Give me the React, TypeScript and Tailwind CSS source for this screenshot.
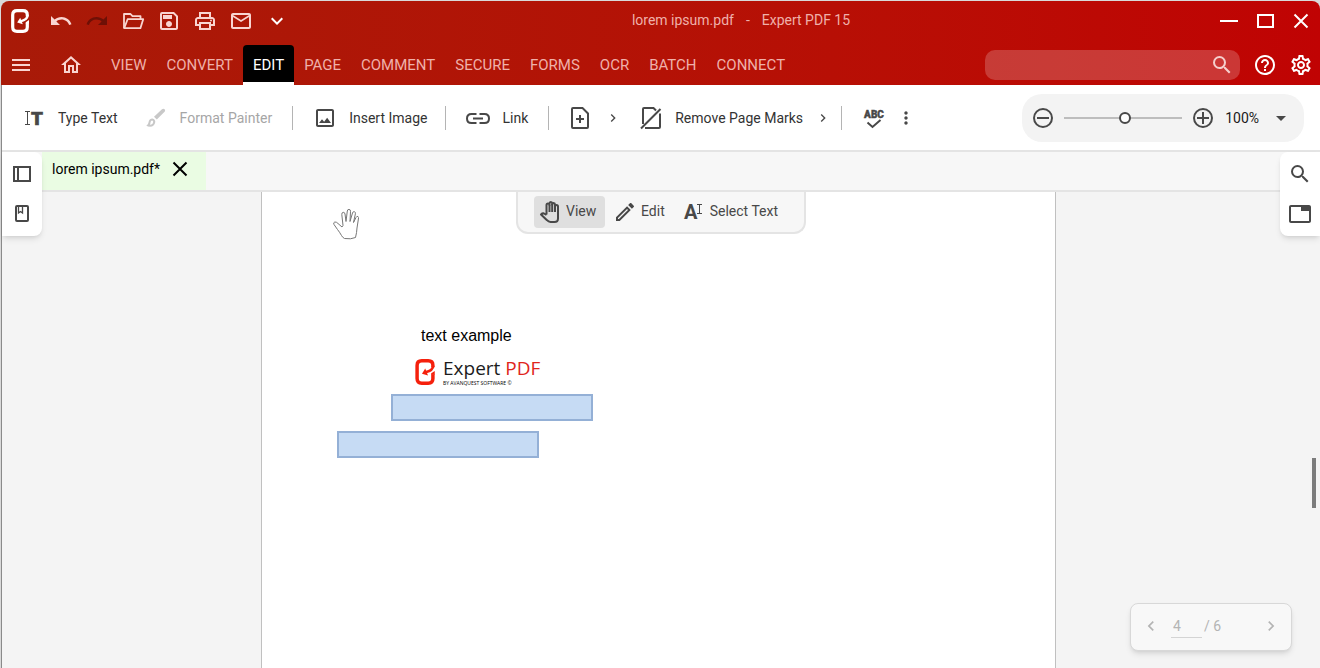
import { ReactNode, useState } from 'react'
import {
  MdArrowDropDown,
  MdHelpOutline,
  MdKeyboardArrowDown,
  MdKeyboardArrowLeft,
  MdKeyboardArrowRight,
  MdMenu,
  MdMoreVert,
  MdOutlineEdit,
  MdOutlineHome,
  MdOutlineImage,
  MdOutlineMail,
  MdOutlinePrint,
  MdOutlineSave,
  MdOutlineSettings,
  MdOutlineTab,
  MdRedo,
  MdSearch,
  MdUndo,
} from 'react-icons/md'

const menuTabs = ['VIEW', 'CONVERT', 'EDIT', 'PAGE', 'COMMENT', 'SECURE', 'FORMS', 'OCR', 'BATCH', 'CONNECT']

function Logo({ className }: { className?: string }) {
  return (
    <svg viewBox="0 0 18 24" className={className} fill="none" stroke="currentColor" aria-hidden="true">
      <path d="M16.3 14V18Q16.300 22.300 12 22.300H6Q1.700 22.300 1.700 18V6Q1.700 1.700 6 1.700H12Q16.300 1.700 16.300 6V7.500" strokeWidth="3.2" />
      <path d="M16.500 6.500Q16.500 10.500 9.500 12.300" strokeWidth="2.400" />
      <path d="M6.200 13.500L9.200 8.800L11.800 15.200Z" fill="currentColor" stroke="none" />
      <path d="M14.700 14.500V13.200L18 11V14.500Z" fill="currentColor" stroke="none" />
    </svg>
  )
}

function FolderOpenIcon() {
  return (
    <svg viewBox="0 0 24 24" className="size-6" fill="none" stroke="currentColor" strokeWidth="1.8" strokeLinejoin="round" aria-hidden="true">
      <path d="M3 19V5H9.5L11.5 7.2H19.5V10" />
      <path d="M3.2 19.2L6.6 10.2H22.2L19.4 19.2Z" />
    </svg>
  )
}

function CloseIcon() {
  return (
    <svg viewBox="0 0 24 24" className="size-6" fill="none" stroke="currentColor" strokeWidth="2" aria-hidden="true">
      <path d="M5.5 5.5L18.5 18.5M18.5 5.5L5.5 18.5" />
    </svg>
  )
}

function LinkIcon() {
  return (
    <svg viewBox="0 0 24 24" className="size-6 shrink-0" fill="none" stroke="currentColor" strokeWidth="2" aria-hidden="true">
      <path d="M10.5 8H5.5Q1 8 1 12.5Q1 17 5.5 17H10.5M13.5 8H18.5Q23 8 23 12.5Q23 17 18.5 17H13.5M7 12.5H17" />
    </svg>
  )
}

function TypeTextIcon() {
  return (
    <svg viewBox="0 0 24 24" className="size-6 shrink-0" aria-hidden="true">
      <path d="M3 5.5H8M3 18.5H8M5.5 5.5V18.5" stroke="currentColor" fill="none" />
      <text x="9" y="19" fontSize="19" fontWeight="900" fontFamily="Roboto, sans-serif" fill="currentColor" stroke="currentColor" strokeWidth="0.6">T</text>
    </svg>
  )
}

function BrushIcon() {
  return (
    <svg viewBox="0 0 24 24" className="size-6 shrink-0" fill="currentColor" aria-hidden="true">
      <path d="M18 3.2Q19.5 2.2 20.7 3.3Q21.6 4.5 20.6 5.8L12.8 13.5L10 10.8Z" />
      <path d="M8.5 12.5Q11.3 13.2 11.3 16Q10.5 20.8 6 20.8Q3.7 20.8 2.3 19.4Q4.3 18.8 4.5 16.5Q5 12.5 8.5 12.5ZM8.2 14.6Q9.2 14.8 9.2 15.8Q9 18.8 5.8 18.8Q6.5 18 6.5 16.6Q6.7 14.6 8.2 14.6Z" fillRule="evenodd" />
    </svg>
  )
}

function AddPageIcon() {
  return (
    <svg viewBox="0 0 24 24" className="size-6 shrink-0" fill="none" stroke="currentColor" strokeWidth="2" aria-hidden="true">
      <path d="M4 2H13.5L19 7.5V21Q19 22 18 22H4Q3 22 3 21V3Q3 2 4 2ZM11 9V17M7 13H15" />
    </svg>
  )
}

function RemoveMarksIcon() {
  return (
    <svg viewBox="0 0 24 24" className="size-6 shrink-0" fill="none" stroke="currentColor" strokeWidth="2" aria-hidden="true">
      <path d="M4 18V3Q4 2 5 2H14.5L17 4.5M21 7.5V21Q21 22 20 22H6M2 22.5L21.500 3" />
    </svg>
  )
}

function SpellCheckIcon() {
  return (
    <svg viewBox="0 0 24 24" className="size-6 shrink-0" aria-hidden="true">
      <text x="12" y="12" textAnchor="middle" fontSize="10" fontWeight="900" fontFamily="Roboto, sans-serif" fill="currentColor" stroke="currentColor" strokeWidth="0.4">ABC</text>
      <path d="M5.5 16.5L10.5 21L18.5 14" fill="none" stroke="currentColor" strokeWidth="2" />
    </svg>
  )
}

function HandIcon() {
  return (
    <svg viewBox="0 0 24 24" className="size-6 shrink-0" fill="none" stroke="currentColor" strokeWidth="2" strokeLinejoin="round" aria-hidden="true">
      <path d="M8.5 14.5V5Q8.5 3.5 10 3.5Q11.5 3.5 11.500 5V3.5Q11.5 2 12.8 2Q14.2 2 14.2 3.5V4.5Q14.3 3 15.6 3Q17 3 17 4.5V6.5Q17.2 5 18.5 5Q20 5 20 6.5V18.5Q20 22 16.5 22H12.5Q10.5 22 9 20.2L3 14.5Q4.5 13 6 13.5L8.5 15" />
      <path d="M11.5 5V12M14.2 4V12M17 5V12" />
    </svg>
  )
}

function SelectTextIcon() {
  return (
    <svg viewBox="0 0 24 24" className="size-6 shrink-0" aria-hidden="true">
      <text x="2" y="19" fontSize="20" fontWeight="700" fontFamily="Roboto, sans-serif" fill="currentColor">A</text>
      <path d="M15 4.5H20M15 13.5H20M17.5 4.5V13.5" stroke="currentColor" fill="none" />
    </svg>
  )
}

function HandCursor() {
  return (
    <svg viewBox="0 0 26 32" className="absolute left-[71px] top-4 h-8 w-[26px]" fill="white" stroke="#777777" aria-hidden="true">
      <path d="M8.5 27.5Q6.5 24 4.5 21.5L1 16.5Q0 14.5 1.8 14Q3.5 13.8 5 15.5L9 19L10 17.5L8.8 6.5Q8.7 4.5 10.2 4.3Q11.7 4.2 12 6L13 13.5L14.3 3Q14.5 1.3 16 1.4Q17.6 1.5 17.5 3.3L17 13.5L19.5 5Q20 3.3 21.4 3.7Q22.7 4 22.4 5.8L20.5 14.5L23 9.5Q23.8 7.9 25 8.5Q26 9.2 25.4 11L24 20Q23.8 24.5 22.5 29.5Q18 31.5 11.5 30.5Q9.5 29.5 8.5 27.5Z" />
    </svg>
  )
}

function IconButton({ label, className = '', children }: { label: string; className?: string; children: ReactNode }) {
  return (
    <button type="button" aria-label={label} className={`flex size-6 shrink-0 items-center justify-center ${className}`}>
      {children}
    </button>
  )
}

function Separator({ className = '' }: { className?: string }) {
  return <span className={`h-6 w-px shrink-0 bg-[#b4b4b4] ${className}`} />
}

function TitleBar() {
  return (
    <div className="flex h-11 items-center pb-1 pl-2.5 pr-[7px] text-[#f9d5d1]">
      <Logo className="h-6 w-[18px] shrink-0 text-white" />
      <div className="ml-5 flex gap-3">
        <IconButton label="Undo"><MdUndo className="size-6" /></IconButton>
        <IconButton label="Redo" className="text-[#6e1006]"><MdRedo className="size-6" /></IconButton>
        <IconButton label="Open"><FolderOpenIcon /></IconButton>
        <IconButton label="Save"><MdOutlineSave className="size-6" /></IconButton>
        <IconButton label="Print"><MdOutlinePrint className="size-6" /></IconButton>
        <IconButton label="Mail"><MdOutlineMail className="size-6" /></IconButton>
        <IconButton label="More" className="text-white"><MdKeyboardArrowDown className="size-6" /></IconButton>
      </div>
      <h1 className="flex flex-1 justify-center gap-3 pb-0.5 pr-6 text-sm text-[#efb0aa]">
        <span>lorem ipsum.pdf</span>
        <span>-</span>
        <span>Expert PDF 15</span>
      </h1>
      <div className="flex gap-3 text-white">
        <IconButton label="Minimize"><span className="h-0.5 w-[18px] bg-white" /></IconButton>
        <IconButton label="Maximize"><span className="h-3.5 w-[17px] border-2 border-white" /></IconButton>
        <IconButton label="Close"><CloseIcon /></IconButton>
      </div>
    </div>
  )
}

function MenuBar() {
  const [active, setActive] = useState('EDIT')

  return (
    <div className="flex h-10 items-center pl-2 pr-[7px] text-white">
      <IconButton label="Menu" className="text-[#f9d5d1]"><MdMenu className="size-6" /></IconButton>
      <IconButton label="Home" className="ml-[26px] text-[#f9d5d1]"><MdOutlineHome className="size-6" /></IconButton>
      <nav className="ml-[18px] flex h-full">
        {menuTabs.map((tab) => (
          <button
            key={tab}
            type="button"
            onClick={() => setActive(tab)}
            className={
              tab === active
                ? 'rounded-t border-b-3 border-white bg-black px-2.5 pt-1 text-[15px] text-white'
                : 'border-b-3 border-transparent px-2.5 pt-1 text-[15px] text-[#efb0aa]'
            }
          >
            {tab}
          </button>
        ))}
      </nav>
      <label className="ml-auto flex h-[30px] w-[255px] items-center rounded-[10px] bg-white/20 pr-1.5">
        <input type="text" aria-label="Search" className="min-w-0 flex-1 bg-transparent px-3 text-sm outline-none" />
        <MdSearch className="size-6 text-[#f5cfcd]" />
      </label>
      <div className="ml-[13px] flex gap-3">
        <IconButton label="Help"><MdHelpOutline className="size-6" /></IconButton>
        <IconButton label="Settings"><MdOutlineSettings className="size-6" /></IconButton>
      </div>
    </div>
  )
}

function ToolButton({ icon, label, disabled, className = '' }: { icon: ReactNode; label: string; disabled?: boolean; className?: string }) {
  return (
    <button
      type="button"
      disabled={disabled}
      className={`flex shrink-0 items-center gap-3 whitespace-nowrap text-sm text-[#333333] disabled:text-[#a6a6a6] [&_svg]:text-[#484848] disabled:[&_svg]:text-[#c8c8c8] ${className}`}
    >
      {icon}
      <span>{label}</span>
    </button>
  )
}

function Toolbar() {
  const [zoom, setZoom] = useState(52)

  return (
    <div className="flex h-[67px] items-center border-b-2 border-[#e4e4e4] bg-white pl-5 pr-4 text-[#484848]">
      <ToolButton icon={<TypeTextIcon />} label="Type Text" />
      <ToolButton icon={<BrushIcon />} label="Format Painter" disabled className="ml-[26px]" />
      <Separator className="mx-5" />
      <ToolButton icon={<MdOutlineImage className="size-6" />} label="Insert Image" />
      <Separator className="ml-[18px] mr-5" />
      <ToolButton icon={<LinkIcon />} label="Link" />
      <Separator className="mx-5" />
      <IconButton label="Insert page"><AddPageIcon /></IconButton>
      <IconButton label="Insert page options" className="ml-2"><MdKeyboardArrowRight className="size-4" /></IconButton>
      <ToolButton icon={<RemoveMarksIcon />} label="Remove Page Marks" className="ml-3.5" />
      <IconButton label="Page marks options" className="ml-2"><MdKeyboardArrowRight className="size-4" /></IconButton>
      <Separator className="ml-1.5 mr-5" />
      <IconButton label="Spell check"><SpellCheckIcon /></IconButton>
      <IconButton label="More tools" className="ml-2"><MdMoreVert className="size-5" /></IconButton>

      <div className="ml-auto flex h-12 shrink-0 items-center rounded-[20px] bg-[#f3f3f3] px-[11px]">
        <button type="button" aria-label="Zoom out" className="flex size-5 items-center justify-center rounded-full border-2 border-[#484848]">
          <span className="h-0.5 w-3 bg-[#484848]" />
        </button>
        <input
          type="range"
          aria-label="Zoom"
          value={zoom}
          onChange={(e) => setZoom(Number(e.target.value))}
          className="mx-[11px] h-0.5 w-[118px] appearance-none bg-[#bdbdbd] [&::-webkit-slider-thumb]:size-3 [&::-webkit-slider-thumb]:appearance-none [&::-webkit-slider-thumb]:rounded-full [&::-webkit-slider-thumb]:border-2 [&::-webkit-slider-thumb]:border-[#484848] [&::-webkit-slider-thumb]:bg-white"
        />
        <button type="button" aria-label="Zoom in" className="relative flex size-5 items-center justify-center rounded-full border-2 border-[#484848]">
          <span className="h-0.5 w-3 bg-[#484848]" />
          <span className="absolute h-3 w-0.5 bg-[#484848]" />
        </button>
        <button type="button" className="ml-3 flex items-center gap-2.5 text-sm text-[#1a1a1a]">
          100%
          <MdArrowDropDown className="size-6 text-[#484848]" />
        </button>
      </div>
    </div>
  )
}

function FileTabs() {
  return (
    <div className="flex h-10 border-b-2 border-[#e4e4e4] bg-[#f7f7f7] pl-10">
      <div className="flex w-[164px] items-center bg-[#eafce3] pb-1 pl-2.5 text-sm text-black">
        <span>lorem ipsum.pdf*</span>
        <IconButton label="Close file" className="ml-2"><CloseIcon /></IconButton>
      </div>
    </div>
  )
}

function ViewModes() {
  return (
    <div className="absolute inset-x-0 top-0 flex justify-center">
      <div className="flex h-[42px] w-[290px] items-start rounded-b-xl border-2 border-t-0 border-[#e4e4e4] bg-[#f7f7f7] pl-4 pt-1 text-sm">
        <button type="button" aria-pressed="true" className="flex h-8 w-[71px] items-center gap-1 rounded bg-[#dfdfdf] pl-1">
          <HandIcon />
          <span className="pb-0.5">View</span>
        </button>
        <button type="button" className="ml-2 flex h-8 items-center gap-1">
          <MdOutlineEdit className="size-6" />
          <span className="pb-0.5">Edit</span>
        </button>
        <button type="button" className="ml-[17px] flex h-8 items-center gap-1">
          <SelectTextIcon />
          <span className="pb-0.5">Select Text</span>
        </button>
      </div>
    </div>
  )
}

function SidePanelIcon() {
  return (
    <svg viewBox="0 0 24 24" className="size-6" fill="none" stroke="currentColor" strokeWidth="2" aria-hidden="true">
      <path d="M4 5H20V19H4ZM8 5V19" />
    </svg>
  )
}

function BookmarkPageIcon() {
  return (
    <svg viewBox="0 0 24 24" className="size-6" fill="none" stroke="currentColor" strokeWidth="2" aria-hidden="true">
      <rect x="6" y="4" width="12" height="15" rx="1" />
      <path d="M8.5 5V11L10.5 9.5L12.5 11V5" strokeWidth="1.3" />
    </svg>
  )
}

function PdfPage() {
  return (
    <div className="relative w-[795px] border-x border-[#c0c0c0] bg-white pl-[75px] pt-[134px]">
      <HandCursor />
      <p className="ml-[84px] font-['Liberation_Sans',Arial,sans-serif] text-base leading-5 text-black">text example</p>
      <div className="ml-[78px] mt-3 flex items-start gap-2">
        <Logo className="mt-px h-[26px] w-5 text-[#f5200c]" />
        <div className="font-['Open_Sans','Noto_Sans',sans-serif]">
          <p className="text-[19px] leading-5 text-[#1c1c1c]">Expert <span className="text-[#e0251b]">PDF</span></p>
          <p className="mt-0.5 text-[5px] leading-[6px] text-black">BY AVANQUEST SOFTWARE ©</p>
        </div>
      </div>
      <div className="ml-[54px] mt-2 h-[27px] w-[202px] border-2 border-[#94b0d6] bg-[#c6dbf4]" />
      <div className="mt-2.5 h-[27px] w-[202px] border-2 border-[#94b0d6] bg-[#c6dbf4]" />
    </div>
  )
}

function Pager() {
  return (
    <div className="absolute bottom-[17px] right-7 flex h-12 w-[162px] items-center rounded-lg border border-[#d8d8d8] bg-[#f8f8f8] px-2 pb-0.5 text-sm text-[#b4b4b4] shadow-md">
      <IconButton label="Previous page"><MdKeyboardArrowLeft className="size-5" /></IconButton>
      <input type="text" aria-label="Page" defaultValue="4" className="ml-2 h-6 w-[31px] border-b border-[#d4d4d4] bg-transparent px-0.5 outline-none" />
      <span className="ml-0.5">/ 6</span>
      <IconButton label="Next page" className="ml-auto"><MdKeyboardArrowRight className="size-5" /></IconButton>
    </div>
  )
}

export default function App() {
  return (
    <div className="flex min-h-screen flex-col bg-[#d9d9d9] pl-px pt-px font-[Roboto,'Liberation_Sans',sans-serif]">
      <header className="rounded-t-lg bg-linear-to-r from-[#a81a08] to-[#c00303]">
        <TitleBar />
        <MenuBar />
      </header>
      <div className="flex flex-1 flex-col border-l border-[#8a8a8a]">
        <Toolbar />
        <div className="relative flex flex-1 flex-col text-[#484848]">
          <FileTabs />
          <main className="relative flex flex-1 justify-center overflow-hidden bg-[#f4f4f4] pr-[5px]">
            <PdfPage />
            <ViewModes />
            <div className="absolute right-1 top-[266px] h-[50px] w-1 bg-[#7c7c7c]" />
            <Pager />
          </main>
          <aside className="absolute left-0 top-0 flex h-[84px] w-10 flex-col items-center gap-4 rounded-r-lg bg-white pt-2.5 shadow-md">
            <IconButton label="Thumbnails"><SidePanelIcon /></IconButton>
            <IconButton label="Bookmarks"><BookmarkPageIcon /></IconButton>
          </aside>
          <aside className="absolute right-0 top-0 flex h-[84px] w-10 flex-col items-center gap-4 rounded-l-lg bg-white pt-2.5 shadow-md">
            <IconButton label="Find"><MdSearch className="size-6" /></IconButton>
            <IconButton label="Properties"><MdOutlineTab className="size-6" /></IconButton>
          </aside>
        </div>
      </div>
    </div>
  )
}
